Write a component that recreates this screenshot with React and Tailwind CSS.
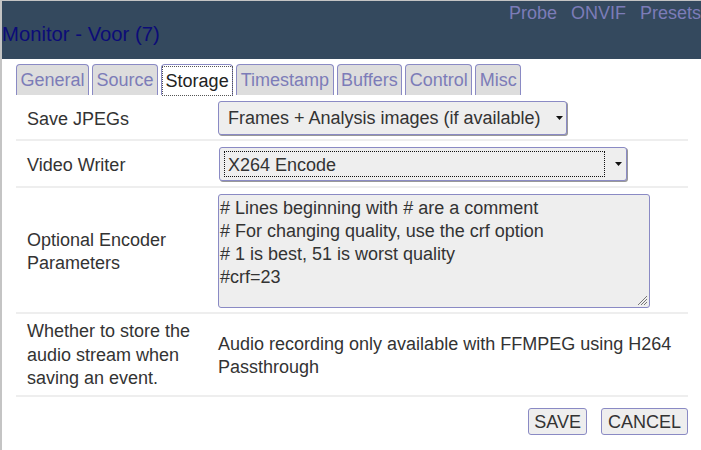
import React from "react";

const tabs = ["General", "Source", "Storage", "Timestamp", "Buffers", "Control", "Misc"];

function Arrow() {
  return (
    <svg width="7" height="4" viewBox="0 0 7 4" className="block">
      <path d="M0 0 L7 0 L3.5 4 Z" fill="#111" />
    </svg>
  );
}

export default function App() {
  return (
    <div
      className="w-[701px] h-[450px] overflow-hidden bg-white border-l-2 border-t border-[#c4c4c4] text-[#333] text-[18px] leading-[23.5px]"
      style={{ fontFamily: '"Liberation Sans", Arial, sans-serif' }}
    >
      {/* header */}
      <div className="relative h-[58px] bg-[#34495e]">
        <div className="absolute left-0 top-[21px] text-[20.3px] leading-[24px] text-[#0c0c78]">
          Monitor - Voor (7)
        </div>
        <div className="absolute right-0 top-[1px] flex gap-[14px] text-[#7c7cb8]">
          <span>Probe</span>
          <span>ONVIF</span>
          <span>Presets</span>
        </div>
      </div>

      {/* tabs */}
      <div className="flex gap-[3px] pl-[14px] pt-[5px]">
        {tabs.map((t) =>
          t === "Storage" ? (
            <div
              key={t}
              className="h-[31px] px-[3.5px] pt-[2px] flex items-center bg-white border border-b-0 border-[#8a8ac4] rounded-t-[4px] text-[#222]"
            >
              <span className="outline-1 outline-dotted outline-[#555] outline-offset-[3px] leading-[22px]">
                {t}
              </span>
            </div>
          ) : (
            <div
              key={t}
              className="h-[31px] px-[3.5px] pt-[2px] flex items-center bg-[#dddddd] border border-b-0 border-[#8a8ac4] rounded-t-[4px] text-[#7c7cb8]"
            >
              {t}
            </div>
          )
        )}
      </div>

      {/* table */}
      <div className="ml-[14px] w-[672px]">
        <div className="flex items-center h-[46px] pt-[2px] border-b-2 border-[#eeeeee]">
          <div className="w-[202px] pl-[11px] pt-[3px]">Save JPEGs</div>
          <div className="flex items-center h-[34px] w-[349px] bg-[#eeeeee] border border-[#8a8ac4] rounded-[3px] shadow-[1px_1px_0_#999] pl-[9px] pr-[3px]">
            <span className="flex-1 whitespace-nowrap pt-[2px]">Frames + Analysis images (if available)</span>
            <Arrow />
          </div>
        </div>

        <div className="flex items-center h-[47px] pt-[1px] border-b-2 border-[#eeeeee]">
          <div className="w-[203px] pl-[11px] pt-[3px]">Video Writer</div>
          <div className="flex items-center h-[34px] w-[408px] bg-[#eeeeee] border border-[#8a8ac4] rounded-[3px] shadow-[1px_1px_0_#999] pl-[4px] pr-[4px]">
            <span className="flex-1 mr-[10px] h-[26px] border border-dotted border-[#111] pl-[3px] pt-[1px] leading-[24px] whitespace-nowrap">
              X264 Encode
            </span>
            <Arrow />
          </div>
        </div>

        <div className="flex items-center h-[126px] pt-[1px] border-b-2 border-[#eeeeee]">
          <div className="w-[202px] pl-[11px] pt-[3px]">
            Optional Encoder
            <br />
            Parameters
          </div>
          <div className="relative w-[432px] h-[114px] bg-[#eeeeee] border border-[#8a8ac4] rounded-[3px] pl-[1px] pt-[2px] leading-[23px] whitespace-pre">
            {"# Lines beginning with # are a comment\n# For changing quality, use the crf option\n# 1 is best, 51 is worst quality\n#crf=23"}
            <svg width="12" height="12" viewBox="0 0 12 12" className="absolute right-[1px] bottom-[1px]">
              <path d="M11 2 L2 11 M11 5 L5 11 M11 8 L8 11" stroke="#777" strokeWidth="1" />
            </svg>
          </div>
        </div>

        <div className="flex items-center h-[83px] pt-[2px] border-b-2 border-[#eeeeee]">
          <div className="w-[202px] pl-[11px] leading-[23.5px]">
            Whether to store the
            <br />
            audio stream when
            <br />
            saving an event.
          </div>
          <div className="w-[465px] leading-[23px]">
            Audio recording only available with FFMPEG using H264
            <br />
            Passthrough
          </div>
        </div>

        <div className="flex justify-end gap-[14px] pt-[11px]">
          <button className="h-[27px] px-[5px] bg-[#eeeeee] border border-[#8a8ac4] rounded-[3px] leading-[24px] pt-[1px]">
            SAVE
          </button>
          <button className="h-[27px] px-[6px] bg-[#eeeeee] border border-[#8a8ac4] rounded-[3px] leading-[24px] pt-[1px]">
            CANCEL
          </button>
        </div>
      </div>
    </div>
  );
}
